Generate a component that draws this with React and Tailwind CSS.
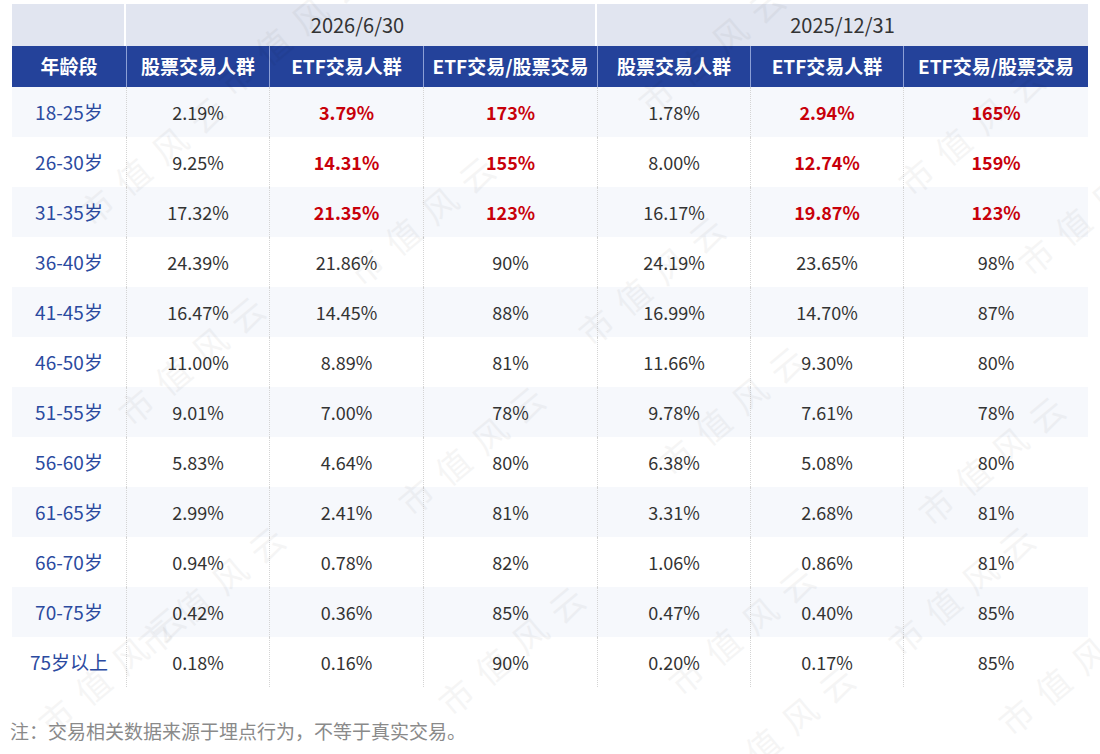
import React from "react";

const rows = [
  ["18-25岁", "2.19%", "3.79%", "173%", "1.78%", "2.94%", "165%", true],
  ["26-30岁", "9.25%", "14.31%", "155%", "8.00%", "12.74%", "159%", true],
  ["31-35岁", "17.32%", "21.35%", "123%", "16.17%", "19.87%", "123%", true],
  ["36-40岁", "24.39%", "21.86%", "90%", "24.19%", "23.65%", "98%", false],
  ["41-45岁", "16.47%", "14.45%", "88%", "16.99%", "14.70%", "87%", false],
  ["46-50岁", "11.00%", "8.89%", "81%", "11.66%", "9.30%", "80%", false],
  ["51-55岁", "9.01%", "7.00%", "78%", "9.78%", "7.61%", "78%", false],
  ["56-60岁", "5.83%", "4.64%", "80%", "6.38%", "5.08%", "80%", false],
  ["61-65岁", "2.99%", "2.41%", "81%", "3.31%", "2.68%", "81%", false],
  ["66-70岁", "0.94%", "0.78%", "82%", "1.06%", "0.86%", "81%", false],
  ["70-75岁", "0.42%", "0.36%", "85%", "0.47%", "0.40%", "85%", false],
  ["75岁以上", "0.18%", "0.16%", "90%", "0.20%", "0.17%", "85%", false],
];

const headers = ["年龄段", "股票交易人群", "ETF交易人群", "ETF交易/股票交易", "股票交易人群", "ETF交易人群", "ETF交易/股票交易"];

const grid = "grid grid-cols-[114px_143px_154px_174px_153px_153px_185px]";

const marks = [
  [60, 130], [330, 190], [560, 250], [880, 100], [1000, 180], [100, 330],
  [380, 420], [640, 380], [900, 430], [120, 560], [420, 620], [650, 600],
  [870, 560], [20, 640], [690, 700], [980, 640], [200, 0], [620, 20],
];

export default function App() {
  return (
    <div
      className="relative w-[1100px] h-[754px] bg-white overflow-hidden"
      style={{ fontFamily: '"Noto Sans CJK SC", "Noto Sans", sans-serif' }}
    >
      <div className="pt-[4px] pl-[12px]">
        <div className="w-[1076px]">
          <div className="grid grid-cols-[114px_471px_491px] h-[42px] bg-[#e1e5f0] text-[20px] text-[#333]">
            <div className="border-r-2 border-white" />
            <div className="flex items-center justify-center border-r-2 border-white pr-[6px]">2026/6/30</div>
            <div className="flex items-center justify-center">2025/12/31</div>
          </div>
          <div className={`${grid} h-[41px] bg-[#24429a] text-white font-bold text-[19px]`}>
            {headers.map((h, i) => (
              <div
                key={i}
                className={`flex items-center justify-center whitespace-nowrap ${i > 0 ? "border-l border-[#8c9fd6]" : ""}`}
              >
                {h}
              </div>
            ))}
          </div>
          {rows.map((r, ri) => (
            <div
              key={ri}
              className={`${grid} h-[50px] text-[18px] ${ri % 2 === 0 ? "bg-[#f6f8fc]" : "bg-white"}`}
            >
              {r.slice(0, 7).map((c, ci) => {
                const red = r[7] && (ci === 2 || ci === 3 || ci === 5 || ci === 6);
                const color = ci === 0 ? "text-[#2b4a9f] text-[19px]" : red ? "text-[#c8000a] font-bold" : "text-[#333]";
                return (
                  <div
                    key={ci}
                    className={`flex items-center justify-center ${color} ${ci > 0 ? "border-l border-dotted border-[#d4d4d4]" : ""}`}
                  >
                    {c}
                  </div>
                );
              })}
            </div>
          ))}
        </div>
      </div>
      <div className="pl-[10px] pt-[30px] text-[19px] text-[#8a8a8a]">
        注：交易相关数据来源于埋点行为，不等于真实交易。
      </div>
      {marks.map(([x, y], i) => (
        <div
          key={i}
          className="absolute pointer-events-none text-[34px] tracking-[14px] text-[#000] opacity-[0.035] -rotate-[40deg] whitespace-nowrap"
          style={{ left: x, top: y, fontFamily: '"Noto Sans CJK SC", serif' }}
        >
          市值风云
        </div>
      ))}
    </div>
  );
}
